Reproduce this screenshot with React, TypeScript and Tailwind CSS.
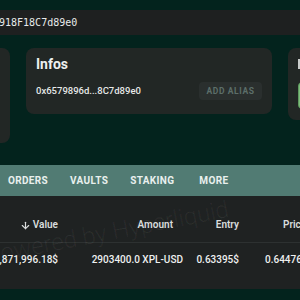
import { ArrowDown } from "lucide-react";

const tabs = ["ORDERS", "VAULTS", "STAKING", "MORE"];

export default function App() {
  return (
    <div className="relative h-[300px] w-[300px] overflow-hidden bg-[#03231d] font-['Roboto',sans-serif]">
      {/* address bar */}
      <div className="pt-[10px]">
        <div className="flex h-[25px] items-center bg-[#1e2020] font-['DejaVu_Sans_Mono',monospace] text-[10px] text-[#e8eaea]">
          <span className="-ml-[1px]">918F18C7d89e0</span>
        </div>
      </div>

      {/* cards */}
      <div className="mt-[13px] flex items-start gap-4">
        <div className="-ml-[90px] h-[95px] w-[100px] shrink-0 rounded-lg bg-[#222725]" />
        <div className="flex h-[66px] w-[246px] shrink-0 flex-col rounded-lg bg-[#222725] px-[10px] pt-[7px]">
          <div className="text-[14px] font-bold leading-[18px] text-[#eef0ef]">Infos</div>
          <div className="mt-[9px] flex items-center justify-between">
            <span className="text-[9.5px] font-medium text-[#e6e9e8]">0x6579896d...8C7d89e0</span>
            <button className="flex h-[18px] w-[63px] items-center justify-center rounded bg-[#2a2f2e] text-[8.5px] font-bold tracking-[0.6px] text-[#5c6e69]">
              ADD ALIAS
            </button>
          </div>
        </div>
        <div className="h-[72px] w-[100px] shrink-0 rounded-lg bg-[#222725] pl-[10px] pt-[11px]">
          <div className="h-[10px] w-[8px] bg-[#c9cccb]" />
          <div className="mt-[13px] h-[27px] w-[60px] rounded-sm border border-[#5f9a5f] bg-[#7dbf7c]" />
        </div>
      </div>

      {/* tabs */}
      <div className="mt-[22px] flex h-[31px] items-center bg-[#517b73] pl-[8px] text-[10px] font-bold tracking-[0.35px] text-[#e9f0ee]">
        {tabs.map((t, i) => (
          <span key={t} className={i === 0 ? "" : i === 3 ? "ml-[25px]" : "ml-[22px]"}>
            {t}
          </span>
        ))}
      </div>

      {/* table */}
      <div className="relative h-[93px] bg-[#1f2222]">
        <div className="flex border-b border-[#2d3131] pb-[10px] pt-[22px] text-[10px] font-semibold leading-[14px] text-[#d9dcdc]">
          <div className="flex w-[58px] shrink-0 items-center justify-end gap-[2px]">
            <ArrowDown className="h-[11px] w-[11px]" strokeWidth={2.5} />
            Value
          </div>
          <div className="flex w-[115px] shrink-0 justify-end">Amount</div>
          <div className="flex w-[66px] shrink-0 justify-end">Entry</div>
          <div className="ml-[44px] shrink-0">Price</div>
        </div>
        <div className="flex whitespace-nowrap pt-[10px] text-[10px] font-medium leading-[14px] text-[#eef0f0]">
          <div className="flex w-[58px] shrink-0 justify-end">1,871,996.18$</div>
          <div className="flex w-[125px] shrink-0 justify-end">2903400.0 XPL-USD</div>
          <div className="flex w-[56px] shrink-0 justify-end">0.63395$</div>
          <div className="ml-[26px] shrink-0">0.64476$</div>
        </div>
        <div className="pointer-events-none absolute left-[-14px] top-[42px] origin-left -rotate-[11deg] whitespace-nowrap text-[24px] font-light text-white/[0.06]">
          Powered by Hyperliquid
        </div>
      </div>
    </div>
  );
}
